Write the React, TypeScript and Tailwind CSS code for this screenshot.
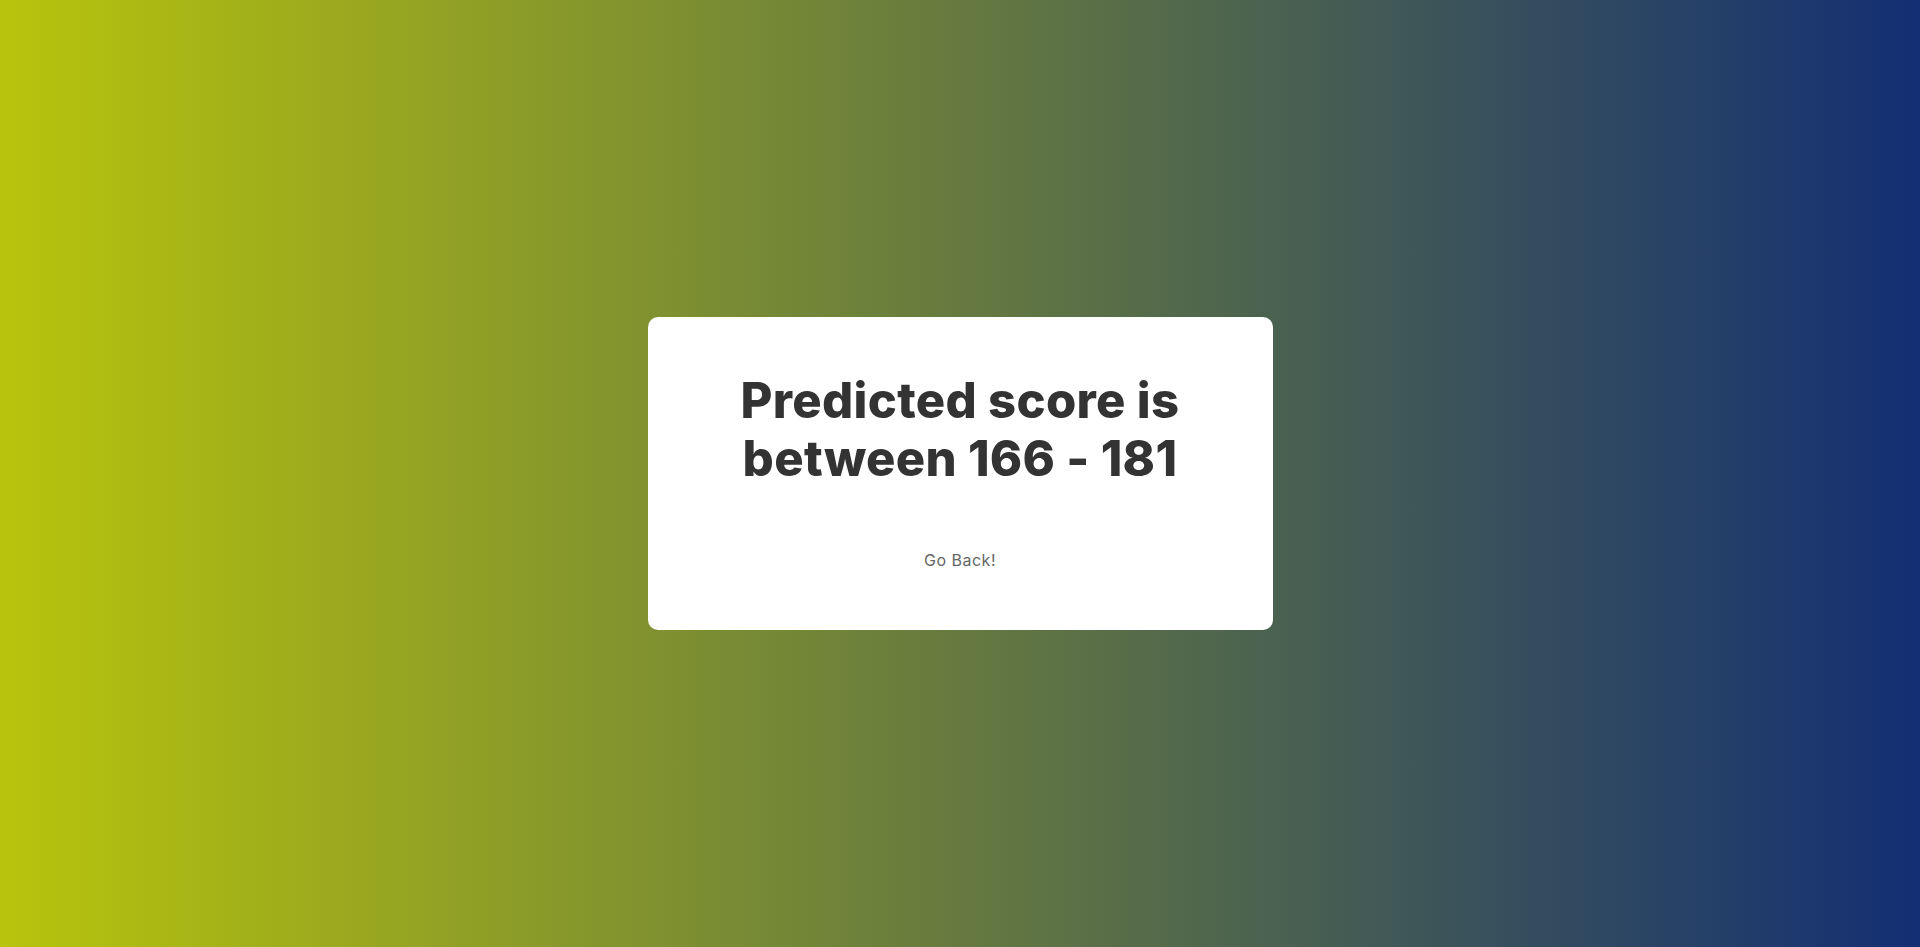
export default function App() {
  return (
    <div
      className="flex h-[947px] w-full items-center justify-center bg-[linear-gradient(to_right,#b8c40c,#132f73)]"
      style={{ fontFamily: 'Inter, "Noto Sans", sans-serif' }}
    >
      <div className="flex w-[625px] flex-col items-center rounded-[10px] bg-white pt-[55px] pb-[58px] text-center">
        <h1 className="text-[49px] font-extrabold leading-[57.6px] tracking-[0.3px] text-[#333333]">
          Predicted score is
          <br />
          between 166 - 181
        </h1>
        <a className="mt-[60px] text-[16px] leading-[24px] tracking-[0.5px] text-[#666666]" href="#">
          Go Back!
        </a>
      </div>
    </div>
  );
}
